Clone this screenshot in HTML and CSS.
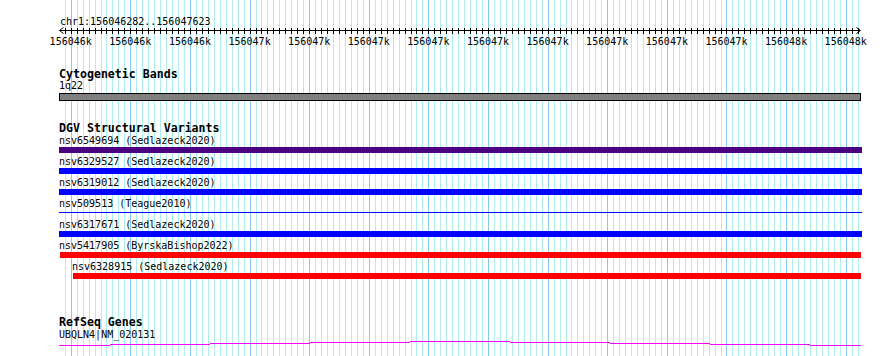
FILE: index.html
```html
<!DOCTYPE html>
<html>
<head>
<title>chr1:156046282..156047623</title>
<link rel="stylesheet" href="styles.css">
</head>
<body>

<div class="browser">
  <svg class="grid" id="grid" width="890" height="356"></svg>

  <svg class="ruler" id="ruler" width="890" height="68">
    <text class="pos" x="60" y="25">chr1:156046282..156047623</text>
    <g id="ticks"></g>
    <path class="arrow" d="M63.5 27.5 L59.5 30.5 L63.5 33.5"/>
    <path class="arrow" d="M856.5 27.5 L860.5 30.5 L856.5 33.5"/>
    <g class="ticklabels" text-anchor="middle">
      <text x="70.7" y="45">156046k</text>
      <text x="130.3" y="45">156046k</text>
      <text x="190" y="45">156046k</text>
      <text x="249.6" y="45">156047k</text>
      <text x="309.2" y="45">156047k</text>
      <text x="368.8" y="45">156047k</text>
      <text x="428.4" y="45">156047k</text>
      <text x="488" y="45">156047k</text>
      <text x="547.6" y="45">156047k</text>
      <text x="607.2" y="45">156047k</text>
      <text x="666.9" y="45">156047k</text>
      <text x="726.5" y="45">156047k</text>
      <text x="786.1" y="45">156048k</text>
      <text x="845.7" y="45">156048k</text>
    </g>
  </svg>

  <div class="track cyto">
    <div class="track-title">Cytogenetic Bands</div>
    <div class="feat-label">1q22</div>
    <div class="band"></div>
  </div>

  <div class="track dgv">
    <div class="track-title">DGV Structural Variants</div>
    <div class="feat">
      <div class="feat-label">nsv6549694 (Sedlazeck2020)</div>
      <div class="bar indigo"></div>
    </div>
    <div class="feat">
      <div class="feat-label">nsv6329527 (Sedlazeck2020)</div>
      <div class="bar blue"></div>
    </div>
    <div class="feat">
      <div class="feat-label">nsv6319012 (Sedlazeck2020)</div>
      <div class="bar blue"></div>
    </div>
    <div class="feat">
      <div class="feat-label">nsv509513 (Teague2010)</div>
      <div class="bar thin"></div>
    </div>
    <div class="feat">
      <div class="feat-label">nsv6317671 (Sedlazeck2020)</div>
      <div class="bar blue"></div>
    </div>
    <div class="feat">
      <div class="feat-label">nsv5417905 (ByrskaBishop2022)</div>
      <div class="bar red"></div>
    </div>
    <div class="feat indent">
      <div class="feat-label">nsv6328915 (Sedlazeck2020)</div>
      <div class="bar red"></div>
    </div>
  </div>

  <div class="track refseq">
    <div class="track-title">RefSeq Genes</div>
    <div class="feat-label">UBQLN4|NM_020131</div>
    <svg class="gene" width="803" height="8">
      <path d="M0 5.5 H51 M51 4.5 H151 M151 3.5 H251 M251 2.5 H351 M351 1.5 H451 M451 2.5 H551 M551 3.5 H651 M651 4.5 H751 M751 5.5 H802"/>
    </svg>
  </div>
</div>

<script type="text/javascript">
  // region is 156046282..156047623 drawn over 800px starting at x=60
  var start = 282, end = 1623;
  var scale = 800 / (end - start + 1);
  var ns = "http://www.w3.org/2000/svg";
  var grid = document.getElementById("grid");
  var ticks = document.getElementById("ticks");

  function rect(parent, x, y, w, h, cls) {
    var r = document.createElementNS(ns, "rect");
    r.setAttribute("x", x);
    r.setAttribute("y", y);
    r.setAttribute("width", w);
    r.setAttribute("height", h);
    r.setAttribute("class", cls);
    parent.appendChild(r);
  }

  for (var bp = 290; bp <= 1620; bp += 10) {
    var x = Math.round(60 + (bp - start) * scale);
    rect(grid, x, 0, 1, 356, bp % 100 == 0 ? "major" : "minor");
    rect(ticks, x, 28, 1, 6, "tick");
  }

  //axis line
  rect(ticks, 60, 30, 800, 1, "tick");
</script>

</body>
</html>
```

FILE: styles.css
```css
html {
  background-color: white;
}

body {
  margin: 0px;
  font-family: "DejaVu Sans Mono", "Liberation Mono", monospace;
  font-size: 10px;
  color: black;
}

.browser {
  position: relative;
  width: 890px;
  height: 356px;
  overflow: hidden;
  background-color: white;
}

.grid {
  position: absolute;
  top: 0px;
  left: 0px;
}

.grid .minor {
  fill: #aeeeee;
}

.grid .major {
  fill: #87cbee;
}

.ruler {
  position: relative;
  display: block;
}

.ruler text {
  font-family: "DejaVu Sans Mono", "Liberation Mono", monospace;
  font-size: 10px;
  fill: black;
}

.ruler .tick {
  fill: black;
}

.ruler .arrow {
  fill: none;
  stroke: black;
  stroke-width: 1;
}

.track {
  position: relative;
  padding-left: 59px;
}

.track-title {
  font-weight: bold;
  font-size: 11.6px;
  line-height: 12px;
  height: 12px;
  white-space: pre;
}

.feat-label {
  line-height: 11px;
  height: 11px;
  white-space: pre;
}

.band {
  box-sizing: border-box;
  margin-top: 2px;
  width: 802px;
  height: 8px;
  border: 1px solid black;
  background-color: #808080;
}

.dgv {
  margin-top: 21px;
}

.dgv .track-title {
  margin-bottom: 1px;
}

.feat {
  height: 21px;
}

.bar {
  margin-top: 1px;
  width: 803px;
  height: 6px;
}

.bar.indigo {
  background-color: #4b0082;
}

.bar.blue {
  background-color: #0000ff;
}

.bar.red {
  margin-left: 1px;
  width: 801px;
  background-color: #ff0000;
}

.bar.thin {
  margin-top: 3px;
  height: 1px;
  background-color: #0000ff;
}

.indent {
  padding-left: 13px;
}

.indent .bar.red {
  margin-left: 1px;
  width: 788px;
}

.refseq {
  margin-top: 34px;
}

.refseq .feat-label {
  margin-top: 1px;
}

.gene {
  display: block;
}

.gene path {
  fill: none;
  stroke: #ff00ff;
  stroke-width: 1;
  shape-rendering: crispEdges;
}
```
